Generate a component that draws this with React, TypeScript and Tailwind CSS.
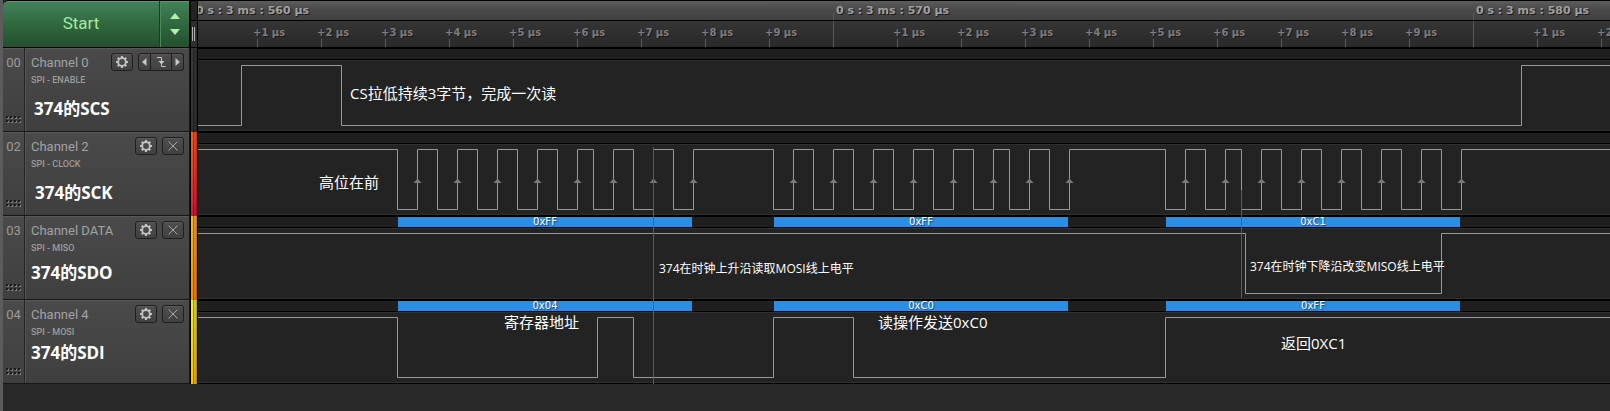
import React, { useEffect, useState } from "react";

type Edge = number;

interface Channel {
  id: string;
  name: string;
  role: string;
  note: string;
  notePlace: string;
  strip: string;
  trigger?: boolean;
  startHigh: boolean;
  edges: Edge[];
  clock?: boolean;
  bytes?: string[];
}

const HIGH = 6;
const LOW = 66;

const byteStarts = [200, 576, 968];

const clockEdges: Edge[] = [
  199, 219, 239, 259, 279, 299, 319, 339, 359, 379, 395, 415, 435, 455, 475, 495,
  575, 595, 615, 635, 655, 675, 695, 715, 735, 755, 775, 795, 811, 831, 851, 871,
  967, 987, 1007, 1027, 1043, 1063, 1083, 1103, 1123, 1143, 1163, 1183, 1203, 1223, 1243, 1263,
];

const channels: Channel[] = [
  {
    id: "00",
    name: "Channel 0",
    role: "SPI - ENABLE",
    note: "374的SCS",
    notePlace: "pt-3 pl-[3px]",
    strip: "from-[#3a3a3a] to-[#333333]",
    trigger: true,
    startHigh: false,
    edges: [43, 143, 1323],
  },
  {
    id: "02",
    name: "Channel 2",
    role: "SPI - CLOCK",
    note: "374的SCK",
    notePlace: "pt-3 pl-1",
    strip: "from-[#ff5a1e] to-[#e01238]",
    startHigh: true,
    edges: clockEdges,
    clock: true,
  },
  {
    id: "03",
    name: "Channel DATA",
    role: "SPI - MISO",
    note: "374的SDO",
    notePlace: "pt-2",
    strip: "from-[#ffb22e] to-[#ff8c00]",
    startHigh: true,
    edges: [1047, 1243],
    bytes: ["0xFF", "0xFF", "0xC1"],
  },
  {
    id: "04",
    name: "Channel 4",
    role: "SPI - MOSI",
    note: "374的SDI",
    notePlace: "pt-1",
    strip: "from-[#f4ee32] to-[#ffc000]",
    startHigh: true,
    edges: [199, 399, 435, 575, 655, 967],
    bytes: ["0x04", "0xC0", "0xFF"],
  },
];

function wavePath(startHigh: boolean, edges: Edge[]) {
  let high = startHigh;
  let d = `M0 ${(high ? HIGH : LOW) - 0.5}`;
  for (const x of edges) {
    d += `H${x + 0.5}`;
    high = !high;
    d += `V${(high ? HIGH : LOW) - 0.5}`;
  }
  return d + "H6000";
}

function Gear() {
  const teeth = [0, 45, 90, 135, 180, 225, 270, 315];
  return (
    <svg width="14" height="14" viewBox="0 0 14 14" fill="none" stroke="#c4c4c4">
      <circle cx="7" cy="7" r="3.8" strokeWidth="1.8" />
      {teeth.map((a) => (
        <path key={a} d="M7 1V3" strokeWidth="2.2" transform={`rotate(${a} 7 7)`} />
      ))}
    </svg>
  );
}

const smallButton =
  "flex h-[18px] items-center justify-center border border-[#1f1f1f] bg-linear-to-b from-[#4e4e4e] to-[#414141] shadow-[inset_0_1px_0_#5a5a5a]";

function ChannelButtons({ trigger, name }: { trigger?: boolean; name: string }) {
  return (
    <div className="flex shrink-0 gap-[5px]">
      <button aria-label={`${name} settings`} className={`${smallButton} w-[22px] rounded-[3px]`}>
        <Gear />
      </button>
      {trigger ? (
        <div className="flex">
          <button aria-label="Previous edge" className={`${smallButton} w-[13px] rounded-l-[3px]`}>
            <svg width="5" height="8" viewBox="0 0 5 8" fill="#c8c8c8">
              <path d="M4.500 0V8L0 4Z" />
            </svg>
          </button>
          <button aria-label="Trigger on falling edge" className={`${smallButton} w-[21px] border-l-0`}>
            <svg width="11" height="12" viewBox="0 0 11 12" fill="none" stroke="#c8c8c8">
              <path d="M1 1.500H5.500V10.500H9.500" />
              <path d="M2.500 5H8.500L5.500 8.500Z" fill="#c8c8c8" stroke="none" />
            </svg>
          </button>
          <button aria-label="Next edge" className={`${smallButton} w-[12px] rounded-r-[3px] border-l-0`}>
            <svg width="5" height="8" viewBox="0 0 5 8" fill="#c8c8c8">
              <path d="M0.500 0V8L5 4Z" />
            </svg>
          </button>
        </div>
      ) : (
        <button aria-label={`Remove ${name}`} className={`${smallButton} w-[22px] rounded-[3px]`}>
          <svg width="10" height="10" viewBox="0 0 10 10" stroke="#a6a6a6">
            <path d="M0.500 0.500L9.500 9.500M9.500 0.500L0.500 9.500" />
          </svg>
        </button>
      )}
    </div>
  );
}

function Grip() {
  return (
    <svg width="15" height="8" viewBox="0 0 15 8">
      {[0, 4, 8, 12].map((x) =>
        [0, 4].map((y) => (
          <g key={`${x}-${y}`}>
            <rect x={x + 1} y={y + 1} width="2" height="2" fill="#7c7c7c" />
            <rect x={x} y={y} width="2" height="2" fill="#1c1c1c" />
          </g>
        )),
      )}
    </svg>
  );
}

function ChannelLabel({ channel }: { channel: Channel }) {
  return (
    <div className="flex w-[187px] shrink-0 border-r border-b border-[#161616] bg-linear-to-b from-[#4a4a4a] to-[#3f3f3f] font-[Roboto,sans-serif] text-[#a3a3a3] shadow-[inset_0_1px_0_#575757]">
      <div className="flex w-[22px] flex-col items-center justify-between border-r border-[#242424] pt-[5px] pb-[7px]">
        <span className="text-[13px] leading-5 text-[#9a9a9a]">{channel.id}</span>
        <Grip />
      </div>
      <div className="flex min-w-0 flex-1 flex-col border-l border-[#555555] pt-[5px] pr-[5px] pl-[5px]">
        <div className="flex items-start justify-between">
          <span className="text-[13px] leading-5 whitespace-nowrap">{channel.name}</span>
          <ChannelButtons trigger={channel.trigger} name={channel.name} />
        </div>
        <span className="text-[9px] leading-[14px] font-medium text-[#9c9c9c]">{channel.role}</span>
        <span
          className={`${channel.notePlace} font-['Open_Sans','Noto_Sans_CJK_SC',sans-serif] text-[17px] leading-5 font-bold text-white`}
        >
          {channel.note}
        </span>
      </div>
    </div>
  );
}

function ChannelPlot({ channel }: { channel: Channel }) {
  const rising = channel.clock ? channel.edges.filter((_, i) => i % 2 === 1) : [];
  return (
    <div className="flex min-w-0 flex-1 flex-col overflow-hidden border-b border-black">
      <div className="relative h-[11px] border-t border-black bg-[#1f1f1f]">
        {channel.bytes?.map((value, i) => (
          <div
            key={i}
            style={{ left: byteStarts[i] }}
            className="absolute top-0 flex h-[10px] w-[294px] items-center justify-center bg-[#2a8ee4] font-['DejaVu_Sans',sans-serif] text-[10px] leading-[10px] text-white [text-shadow:1px_1px_1px_#00000080]"
          >
            {value}
          </div>
        ))}
      </div>
      <div className="flex-1 border-y border-t-black border-b-[#303030] bg-[#232323] shadow-[inset_0_1px_0_#303030]">
        <svg width="100%" height="70" fill="none" className="block">
          <path d={wavePath(channel.startHigh, channel.edges)} stroke="#989898" />
          {rising.map((x) => (
            <path key={x} d={`M${x + 0.5} 34.500L${x + 4.5} 39H${x - 3.5}Z`} fill="#7a7a7a" />
          ))}
        </svg>
      </div>
    </div>
  );
}

const RULER_START = 193;
const TICK_STEP = 64;

function useVisibleTicks() {
  const count = () => Math.ceil((window.innerWidth - RULER_START) / TICK_STEP);
  const [ticks, setTicks] = useState(count);
  useEffect(() => {
    const update = () => setTicks(count());
    window.addEventListener("resize", update);
    return () => window.removeEventListener("resize", update);
  }, []);
  return Array.from({ length: ticks }, (_, i) => i);
}

function Ruler() {
  const ticks = useVisibleTicks();
  const majors = ticks.filter((i) => i % 10 === 0);
  return (
    <div className="min-w-0 flex-1 overflow-hidden border-y border-black bg-[#2b2b2b] font-['DejaVu_Sans',sans-serif] font-bold text-[#a0a0a0] [text-shadow:1px_1px_0_#1a1a1a]">
      <div className="-ml-[5px] flex h-[20px] border-b border-black bg-linear-to-b from-[#5c5c5c] from-0% via-[#484848] via-50% to-[#414141]">
        {majors.map((i) => (
          <div key={i} className="flex w-[640px] shrink-0">
            <div className="mt-2 w-px bg-linear-to-b from-transparent to-[#606060]" />
            <span className="pl-[2px] text-[11px] leading-[19px]">{`0 s : 3 ms : ${560 + i} μs`}</span>
          </div>
        ))}
      </div>
      <div className="-ml-[5px] flex h-[26px] bg-linear-to-b from-[#353535] to-[#292929] text-[10px] text-[#7d7d7d]">
        {ticks.map((i) =>
          i % 10 === 0 ? (
            <div key={i} className="w-16 shrink-0 border-l border-[#5a5a5a]" />
          ) : (
            <div key={i} className="flex w-16 shrink-0 flex-col">
              <span className="-ml-1 h-[18px] leading-[23px] whitespace-nowrap">{`+${i % 10} μs`}</span>
              <i className="h-2 w-px bg-[#5a5a5a]" />
            </div>
          ),
        )}
      </div>
    </div>
  );
}

function Header() {
  return (
    <header className="flex h-12">
      <div className="flex w-[187px] shrink-0 overflow-hidden rounded-tl-md border-y border-r border-black bg-linear-to-b from-[#43845a] via-[#30683f] to-[#24502f] font-[Roboto,sans-serif] text-[#a8e8a0] shadow-[inset_0_1px_0_#5a9a6e]">
        <button className="flex-1 border-r border-[#1b3d24] text-[17px]">Start</button>
        <div className="flex w-[29px] flex-col items-center justify-center gap-[10px] border-l border-[#4c8a5c]">
          <button aria-label="Increase" className="flex">
            <svg width="10" height="6" viewBox="0 0 10 6" fill="#b4eea8">
              <path d="M5 0L10 6H0Z" />
            </svg>
          </button>
          <button aria-label="Decrease" className="flex">
            <svg width="10" height="6" viewBox="0 0 10 6" fill="#b4eea8">
              <path d="M0 0H10L5 6Z" />
            </svg>
          </button>
        </div>
      </div>
      <div className="flex w-2 shrink-0 flex-col border-x border-black bg-[#2c2c2c]">
        <div className="h-[21px] border-y border-black bg-[#242424]" />
        <div className="flex flex-1 items-center gap-px border-b border-black bg-[#303030] pl-px">
          <i className="h-[14px] w-px bg-[#b0b0b0]" />
          <i className="h-[14px] w-px bg-[#b0b0b0]" />
        </div>
      </div>
      <Ruler />
    </header>
  );
}

const noteFont = "absolute whitespace-nowrap font-['Open_Sans','Noto_Sans_CJK_SC',sans-serif] text-white";

function Annotations() {
  return (
    <div className="pointer-events-none absolute inset-y-0 right-0 left-[195px] overflow-hidden">
      <div className="absolute top-[99px] left-[455px] h-[237px] w-px bg-[#e02424]" />
      <div className="absolute top-[142px] left-[1043px] h-[108px] w-px bg-[#e02424]" />
      <p className={`${noteFont} top-[35px] left-[152px] text-[15px] leading-5`}>CS拉低持续3字节，完成一次读</p>
      <p className={`${noteFont} top-[124px] left-[121px] text-[15px] leading-5`}>高位在前</p>
      <p className={`${noteFont} top-[211px] left-[461px] text-xs leading-5`}>374在时钟上升沿读取MOSI线上电平</p>
      <p className={`${noteFont} top-[209px] left-[1052px] text-xs leading-5`}>374在时钟下降沿改变MISO线上电平</p>
      <p className={`${noteFont} top-[264px] left-[306px] text-[15px] leading-5`}>寄存器地址</p>
      <p className={`${noteFont} top-[264px] left-[680px] text-[15px] leading-5`}>读操作发送0xC0</p>
      <p className={`${noteFont} top-[285px] left-[1083px] text-[15px] leading-5`}>返回0XC1</p>
    </div>
  );
}

export default function App() {
  return (
    <div className="flex min-h-screen flex-col overflow-hidden border-l-3 border-[#5c5c5c] bg-[#282828]">
      <Header />
      <main className="relative">
        {channels.map((c) => (
          <section key={c.id} className="flex h-[84px]">
            <ChannelLabel channel={c} />
            <div className={`flex w-2 shrink-0 border-x border-black bg-linear-to-b ${c.strip}`}>
              <i className="ml-[2px] w-px bg-black/40" />
              <i className="w-[2px] bg-black/15" />
              <i className="w-px bg-black/30" />
            </div>
            <ChannelPlot channel={c} />
          </section>
        ))}
        <Annotations />
      </main>
    </div>
  );
}
